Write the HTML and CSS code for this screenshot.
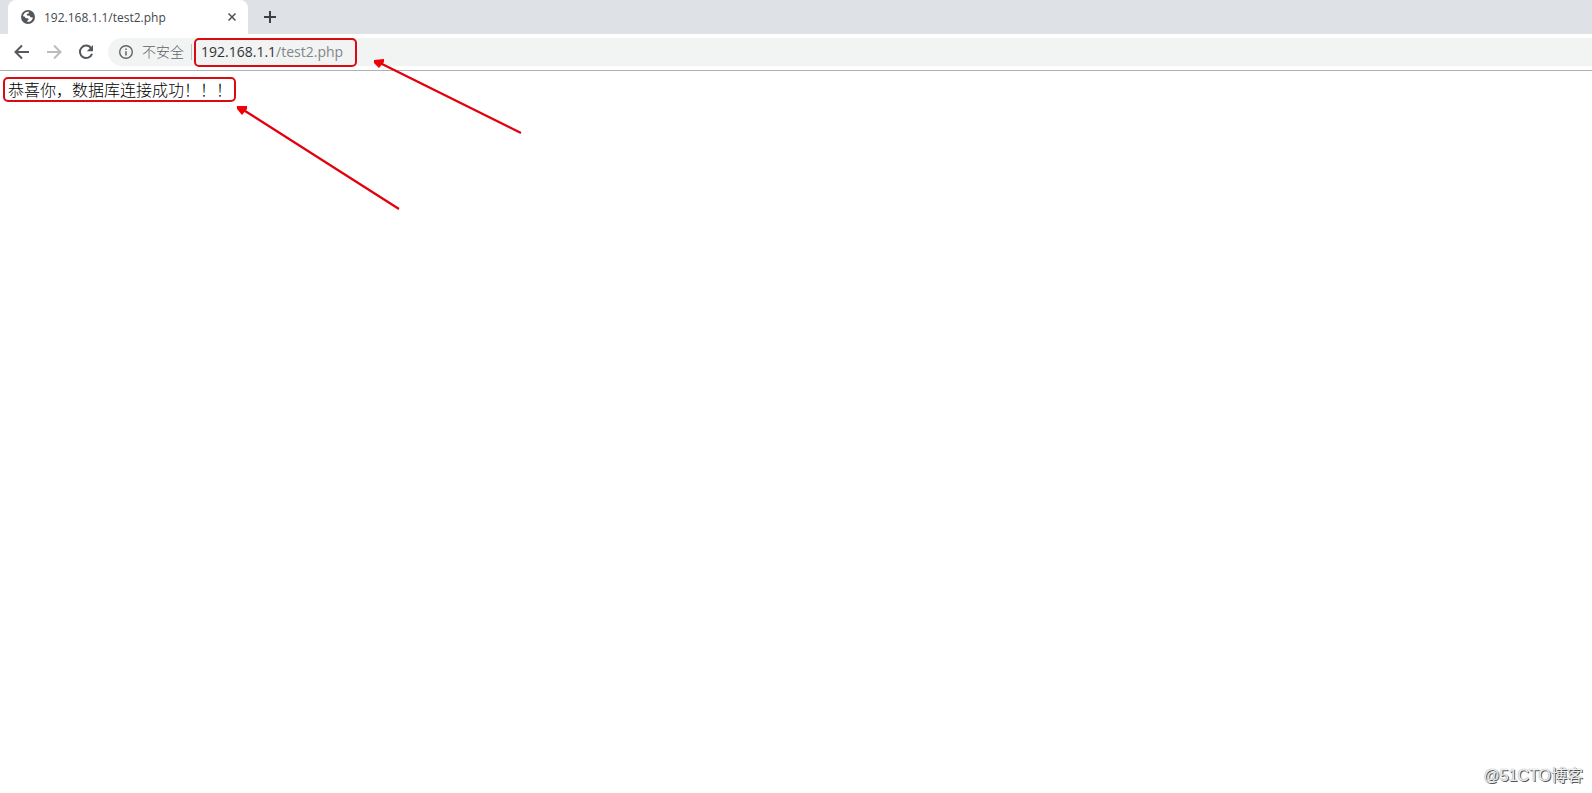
FILE: index.html
```html
<!DOCTYPE html>
<html lang="zh-CN">
<head>
<meta charset="utf-8">
<title>192.168.1.1/test2.php</title>
<link rel="stylesheet" href="styles.css">
</head>
<body>
<header class="browser">
  <div class="tab-strip">
    <div class="tab">
      <svg class="favicon" viewBox="0 0 14 14" aria-hidden="true"><circle cx="7" cy="7" r="7" fill="#53575b"/><path d="M2 6.200C2.200 4 4 2 6.500 1.700L8 1.800L7.600 3.400L5.800 4L6 5.500L8.600 5.800L9.500 7.200L11.900 7.400C11.600 10 9.500 12 6.500 12L6.300 10.800L7.800 9.500L7.200 8.400L4.500 8L3.600 6.400Z" fill="#fff"/></svg>
      <span class="tab-title">192.168.1.1/test2.php</span>
      <button class="tab-close" type="button" aria-label="关闭"><svg viewBox="0 0 8 8"><path d="M.5.5l7 7M7.500.5l-7 7" stroke="#4d5156" stroke-width="1.500"/></svg></button>
    </div>
    <button class="new-tab" type="button" aria-label="新标签页"><svg viewBox="0 0 12 12"><path d="M6 0v12M0 6h12" stroke="#3c4043" stroke-width="2"/></svg></button>
  </div>
  <nav class="toolbar">
    <button class="nav-button" type="button" aria-label="后退"><svg viewBox="0 0 16 16"><path d="M15 8H2M8 1.500L1.500 8L8 14.500" fill="none" stroke="#55595e" stroke-width="2"/></svg></button>
    <button class="nav-button" type="button" aria-label="前进"><svg viewBox="0 0 16 16"><path d="M1 8h13M8 1.500L14.500 8L8 14.500" fill="none" stroke="#babcbe" stroke-width="2"/></svg></button>
    <button class="nav-button" type="button" aria-label="重新加载"><svg viewBox="0 0 16 16"><path d="M13.200 4.200A6.200 6.200 0 1 0 14 9.800" fill="none" stroke="#55595e" stroke-width="2"/><path d="M15 1v6.200H8.800Z" fill="#55595e"/></svg></button>
    <div class="omnibox">
      <button class="security" type="button"><svg viewBox="0 0 14 14"><circle cx="7" cy="7" r="6.300" fill="none" stroke="#5f6368" stroke-width="1.400"/><path d="M7 6.200v4.300M7 3.400v1.600" stroke="#5f6368" stroke-width="1.500"/></svg><span>不安全</span></button>
      <span class="divider"></span>
      <div class="address" role="textbox" aria-label="地址" contenteditable="true" spellcheck="false"><span class="host">192.168.1.1</span>/test2.php</div>
    </div>
  </nav>
</header>
<main class="page">
  <p class="message">恭喜你，数据库连接成功！！！</p>
</main>
<svg class="annotations" width="560" height="240" viewBox="0 0 560 240" aria-hidden="true">
  <g fill="none" stroke="#d90a12" stroke-width="2">
    <rect x="195" y="39" width="161" height="27" rx="4"/>
    <rect x="4" y="78" width="231" height="23" rx="4"/>
    <path d="M378 62L521 133M242 109L399 209" stroke="#e3000c" stroke-width="2.300"/>
  </g>
  <path d="M374 60L384 59L384 62L379 68L374 63ZM237 106H247V109L242 115L237 109Z" fill="#f20008"/>
</svg>
<div class="watermark">@51CTO博客</div>
</body>
</html>
```
FILE: styles.css
```css
* { box-sizing: border-box; }
body {
  margin: 0;
  min-height: 100vh;
  background: #fff;
  color: #111;
  font-family: "Open Sans", "Noto Sans CJK SC", sans-serif;
}
button {
  border: 0;
  padding: 0;
  background: none;
  font: inherit;
  color: inherit;
}
svg { display: block; }
.browser { border-bottom: 1px solid #aeb0b2; }
.tab-strip {
  display: flex;
  height: 34px;
  padding-left: 8px;
  background: #dee1e6;
}
.tab {
  display: flex;
  align-items: center;
  width: 240px;
  padding: 0 12px;
  border-radius: 8px 8px 0 0;
  background: #fff;
}
.favicon { width: 14px; height: 14px; margin-right: 9px; margin-left: 1px; }
.tab-title { flex: 1; font-size: 12px; color: #45494d; }
.tab-close svg { width: 8px; height: 8px; }
.new-tab { padding: 0 16px; }
.new-tab svg { width: 12px; height: 12px; }
.toolbar {
  display: flex;
  align-items: center;
  height: 36px;
  padding-left: 14px;
  gap: 16px;
}
.nav-button svg { width: 16px; height: 16px; }
.omnibox {
  display: flex;
  flex: 1;
  align-items: center;
  height: 28px;
  margin-left: -2px;
  padding-left: 11px;
  border-radius: 14px 0 0 14px;
  background: #f2f3f3;
}
.security {
  display: flex;
  align-items: center;
  gap: 9px;
  font-size: 14px;
  font-weight: 300;
  line-height: 20px;
  color: #5f6368;
}
.security svg { width: 14px; height: 14px; }
.divider { width: 1px; height: 16px; margin: 0 9px 0 7px; background: #bdc1c6; }
.address {
  flex: 1;
  font-size: 14px;
  line-height: 20px;
  color: #80868b;
  outline: 0;
}
.host { color: #303338; }
.page { padding: 8px; }
.message { margin: 0; font-size: 16px; line-height: 22px; font-weight: 300; color: #000; }
.annotations { position: absolute; top: 0; left: 0; pointer-events: none; }
.watermark {
  position: absolute;
  right: 9px;
  bottom: 6px;
  font-family: "Liberation Sans", "Noto Sans CJK SC", sans-serif;
  font-size: 16px;
  line-height: 22px;
  color: #eee;
  text-shadow: 1px 1px 0 #555, 0 0 1px #777;
}
```
